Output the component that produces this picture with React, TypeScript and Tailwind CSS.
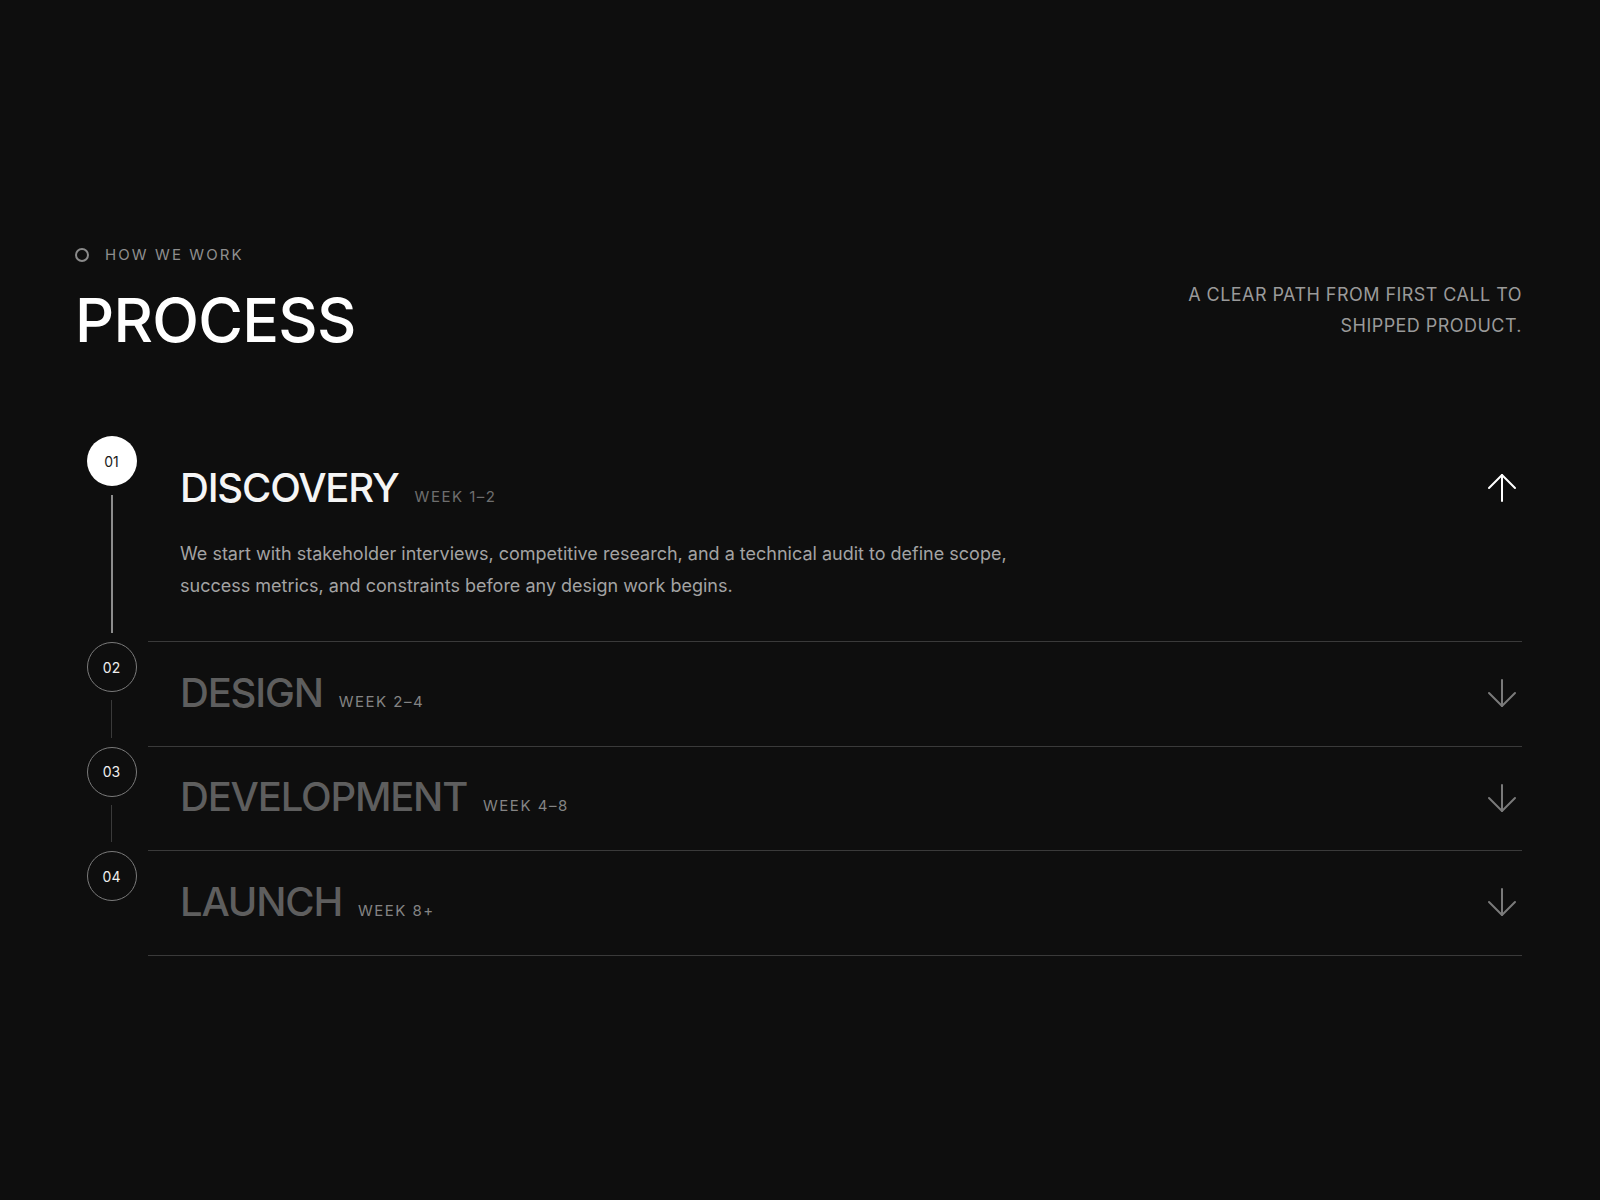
import React from "react";

type Step = { num: string; title: string; week: string; desc?: string };

const steps: Step[] = [
  {
    num: "01",
    title: "DISCOVERY",
    week: "WEEK 1–2",
    desc:
      "We start with stakeholder interviews, competitive research, and a technical audit to define scope, success metrics, and constraints before any design work begins.",
  },
  { num: "02", title: "DESIGN", week: "WEEK 2–4" },
  { num: "03", title: "DEVELOPMENT", week: "WEEK 4–8" },
  { num: "04", title: "LAUNCH", week: "WEEK 8+" },
];

function Arrow({ up, color }: { up: boolean; color: string }) {
  return (
    <svg width="30" height="30" viewBox="0 0 30 30" fill="none" stroke={color} strokeWidth="2" strokeLinecap="round" strokeLinejoin="round">
      {up ? (
        <>
          <path d="M15 2 V28" />
          <path d="M2 15 L15 2 L28 15" />
        </>
      ) : (
        <>
          <path d="M15 2 V28" />
          <path d="M2 15 L15 28 L28 15" />
        </>
      )}
    </svg>
  );
}

export default function App() {
  return (
    <div
      className="min-h-[1200px] w-full bg-[#0e0e0e] text-white"
      style={{ fontFamily: "Inter, 'Noto Sans', sans-serif" }}
    >
      <div className="pl-[75px] pr-[78px] pt-[245px]">
        <div className="flex items-start justify-between">
          <div>
            <div className="flex h-5 items-center gap-4">
              <span className="block h-[14px] w-[14px] rounded-full border-2 border-[#8a8a8a]" />
              <span className="text-[15px] leading-5 tracking-[0.14em] text-[#8e8e8e]">HOW WE WORK</span>
            </div>
            <h1 className="mt-[25px] text-[61px] font-medium leading-[60px] tracking-[-0.012em] text-white">PROCESS</h1>
          </div>
          <p className="mt-[34px] text-right text-[18px] leading-[31px] tracking-[0.025em] text-[#9a9a9a]">
            A CLEAR PATH FROM FIRST CALL TO
            <br />
            SHIPPED PRODUCT.
          </p>
        </div>

        <div className="mt-[86px]">
          {steps.map((s, i) => {
            const open = i === 0;
            const last = i === steps.length - 1;
            return (
              <div key={s.num} className="flex">
                <div className="flex w-[73px] shrink-0 flex-col items-center">
                  <div
                    className={
                      open
                        ? "flex h-[50px] w-[50px] items-center justify-center rounded-full bg-white text-[14px] text-[#1a1a1a]"
                        : "flex h-[50px] w-[50px] items-center justify-center rounded-full border-[1.5px] border-[#7a7a7a] text-[14px] text-[#eeeeee]"
                    }
                  >
                    {s.num}
                  </div>
                  {!last && (
                    <div className={open ? "mb-[9px] mt-[9px] w-[2px] flex-1 bg-[#8c8c8c]" : "mb-[9px] mt-[8px] w-px flex-1 bg-[#3a3a3a]"} />
                  )}
                </div>
                <div
                  className={
                    open
                      ? "flex-1 border-b border-[#3a3a3a] pb-[39px] pl-8 pt-[32px]"
                      : "flex-1 border-b border-[#3a3a3a] pb-[32.5px] pl-8 pt-[31px]"
                  }
                >
                  <div className="flex h-10 items-center justify-between">
                    <div className="flex items-baseline">
                      <span
                        className={
                          open
                            ? "text-[40px] font-medium leading-10 tracking-[-0.03em] text-[#f5f5f5]"
                            : "text-[40px] font-medium leading-10 tracking-[-0.03em] text-[#5e5e5e]"
                        }
                      >
                        {s.title}
                      </span>
                      <span className={open ? "ml-4 text-[15px] tracking-[0.1em] text-[#6e6e6e]" : "ml-4 text-[15px] tracking-[0.1em] text-[#848484]"}>
                        {s.week}
                      </span>
                    </div>
                    <div className="flex h-10 w-10 items-center justify-center">
                      <Arrow up={open} color={open ? "#ffffff" : "#7a7a7a"} />
                    </div>
                  </div>
                  {open && s.desc && (
                    <p className="mt-[30px] max-w-[860px] text-[18px] leading-[32px] tracking-[0em] text-[#a3a3a3]">{s.desc}</p>
                  )}
                </div>
              </div>
            );
          })}
        </div>
      </div>
    </div>
  );
}
